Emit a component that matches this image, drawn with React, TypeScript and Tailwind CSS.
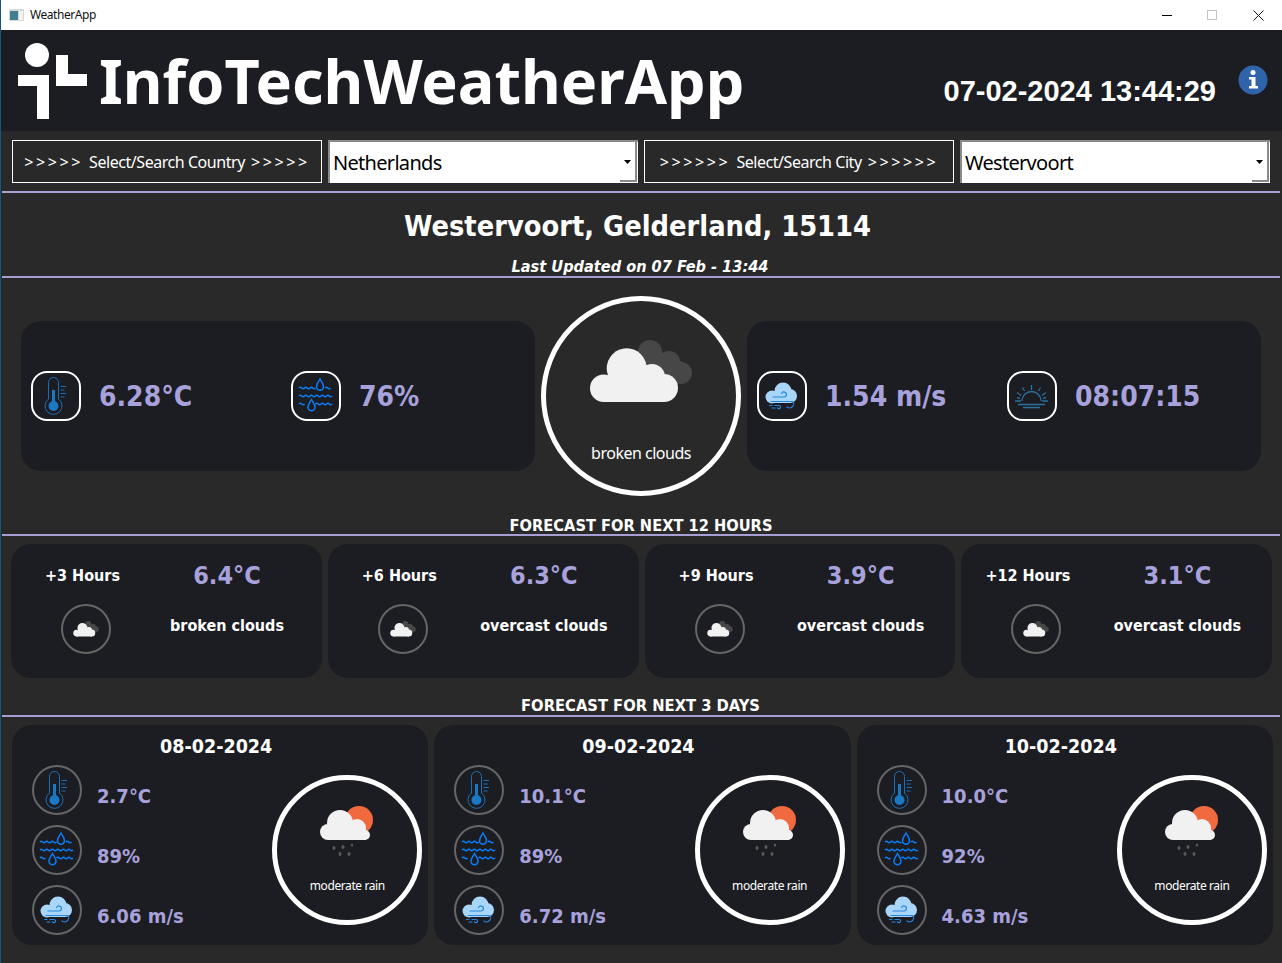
import { ReactNode } from 'react';

const hourly = [
  { label: '+3 Hours', temp: '6.4°C', desc: 'broken clouds', labelClass: 'pl-[34px]' },
  { label: '+6 Hours', temp: '6.3°C', desc: 'overcast clouds', labelClass: 'pl-[34px]' },
  { label: '+9 Hours', temp: '3.9°C', desc: 'overcast clouds', labelClass: 'pl-[34px]' },
  { label: '+12 Hours', temp: '3.1°C', desc: 'overcast clouds', labelClass: 'pl-[24px]' },
];

const daily = [
  { date: '08-02-2024', temp: '2.7°C', hum: '89%', wind: '6.06 m/s' },
  { date: '09-02-2024', temp: '10.1°C', hum: '89%', wind: '6.72 m/s' },
  { date: '10-02-2024', temp: '10.0°C', hum: '92%', wind: '4.63 m/s' },
];

// closest installed face to the bold headings in the picture
const boldFace = "font-['DejaVu_Sans_Condensed','DejaVu_Sans',sans-serif] font-stretch-condensed font-bold";

const Thermometer = () => (
  <svg viewBox="0 0 50 50" className="w-full h-full" fill="none">
    <path d="M17.500 28V11.500a5 5 0 0 1 10 0V28a8.500 8.500 0 1 1-10 0z" stroke="#1b6fb4" strokeWidth="1" />
    <rect x="21" y="19" width="3" height="14" fill="#1b78c4" />
    <circle cx="22.500" cy="35" r="5" fill="#1b78c4" />
    <path d="M29.500 15.500h5.500M29.500 19h4M29.500 22.500h5.500M29.500 26h4" stroke="#1b6fb4" strokeWidth="1" />
  </svg>
);

const Humidity = () => {
  const wave = (y: number, x1: number, x2: number) => {
    let d = `M${x1} ${y}`;
    for (let x = x1; x < x2; x += 5.5) d += `q1.375 -1.600 2.750 0 t2.750 0`;
    return d;
  };
  return (
    <svg viewBox="0 0 50 50" className="w-full h-full" fill="none" stroke="#0b7df5" strokeWidth="1.500">
      <path d={wave(17, 8, 24)} />
      <path d={wave(17, 34, 39)} />
      <path d={wave(25, 8, 40)} />
      <path d={wave(33, 8, 13)} />
      <path d={wave(33, 24.500, 40)} />
      <path d="M29 8c-1.500 2.800-3.500 4.800-3.500 7.800a3.500 3.500 0 0 0 7 0c0-3-2-5-3.500-7.800z" />
      <path d="M20.500 28.500c-1.500 2.800-3.500 4.800-3.500 7.800a3.500 3.500 0 0 0 7 0c0-3-2-5-3.500-7.800z" />
    </svg>
  );
};

const WindCloud = () => (
  <svg viewBox="0 0 50 50" className="w-full h-full" fill="none">
    <g fill="#a9d6f8">
      <circle cx="26" cy="20" r="8.500" />
      <circle cx="15" cy="26" r="6.500" />
      <circle cx="33" cy="25" r="7" />
      <rect x="15" y="22" width="18" height="10" />
    </g>
    <g stroke="#2488e2" strokeWidth="1.200" strokeLinecap="round">
      <path d="M16 26h11a2.500 2.500 0 1 0-2.400-3.400" />
      <path d="M14 30.500h22a4 4 0 0 1-1 5.500 4 4 0 0 1-5 0" />
      <path d="M18 34.500h4a1.600 1.600 0 1 1-1.500 2.200" />
      <path d="M12.500 34.500h2.500M15 37h3" />
    </g>
  </svg>
);

const Sunrise = () => (
  <svg viewBox="0 0 50 50" className="w-full h-full" fill="none" stroke="#2a6f9e" strokeWidth="1.300">
    <path d="M15 30a9.500 9.500 0 0 1 19 0" />
    <path d="M8 30h6M35 30h6M11 33.500h27M16 36.500h17" />
    <path d="M24.500 14v5M15.500 16.500l2 3.500M33.500 16.500l-2 3.500M10 21.500l4 3M39 21.500l-4 3M10 26.500l3 .8M39 26.500l-3 .8" />
  </svg>
);

// big white cloud with a dark one behind it
const BrokenCloud = ({ className }: { className: string }) => (
  <svg viewBox="0 0 102 64" className={className}>
    <g fill="#474747">
      <circle cx="60" cy="12" r="12" />
      <circle cx="79" cy="22" r="11" />
      <circle cx="91" cy="33" r="11" />
      <path d="M52 3L97 24L88 44L40 30z" />
    </g>
    <g fill="#f1f1f1">
      <circle cx="36.700" cy="28.300" r="20" />
      <circle cx="13.700" cy="48.300" r="13.700" />
      <circle cx="62" cy="37" r="13" />
      <circle cx="74" cy="48" r="14" />
      <rect x="13" y="36" width="62" height="26" />
    </g>
  </svg>
);

const RainCloud = ({ className }: { className: string }) => (
  <svg viewBox="0 0 54 52" className={className}>
    <circle cx="39" cy="15" r="14" fill="#f0693f" />
    <g fill="#f1f1f1">
      <circle cx="20" cy="18" r="13" />
      <circle cx="8" cy="27" r="8" />
      <circle cx="37" cy="23" r="9" />
      <circle cx="45" cy="30" r="5" />
      <rect x="8" y="22" width="38" height="13" />
    </g>
    <g fill="#5a5a5a">
      <ellipse cx="14" cy="43" rx="1.500" ry="2" />
      <ellipse cx="23" cy="42" rx="1.500" ry="2" />
      <ellipse cx="32" cy="40" rx="1.200" ry="1.500" />
      <ellipse cx="20" cy="49" rx="1.500" ry="2" />
      <ellipse cx="29" cy="49" rx="1.500" ry="2" />
    </g>
  </svg>
);

const IconBox = ({ children }: { children: ReactNode }) => (
  <div className="w-[50px] h-[50px] shrink-0 rounded-[16px] border-2 border-white">
    <div className="w-[50px] h-[50px] -m-[2px]">{children}</div>
  </div>
);

const IconCircle = ({ children }: { children: ReactNode }) => (
  <div className="w-[50px] h-[50px] shrink-0 rounded-full border-2 border-[#666666]">
    <div className="w-[50px] h-[50px] -m-[2px]">{children}</div>
  </div>
);

const Stat = ({ icon, value, className }: { icon: ReactNode; value: string; className?: string }) => (
  <div className={`flex items-center gap-[18px] ${className ?? ''}`}>
    <IconBox>{icon}</IconBox>
    <span className={`text-[28px] mt-[2px] text-[#a8a2dc] ${boldFace}`}>{value}</span>
  </div>
);

const Divider = () => <div className="h-[2px] ml-[1px] mr-[2px] shrink-0 bg-[#a79fd4]" />;

const Combo = ({ value }: { value: string }) => (
  <div className="relative w-[310px] h-[43px] bg-white border-t-2 border-l-2 border-[#8a8a8a] flex items-center pl-[3px] text-[20px] tracking-[-0.7px] text-black">
    {value}
    <svg viewBox="0 0 7 4" className="absolute right-[7px] top-[18px] w-[7px] h-[4px]">
      <path d="M0 0h7L3.500 4z" fill="#000" />
    </svg>
    <div className="absolute right-[1px] bottom-[1px] w-[17px] h-[2px] bg-[#8a8a8a]" />
    <div className="absolute right-[1px] top-0 bottom-[1px] w-[2px] bg-[#8a8a8a]" />
  </div>
);

const SearchLabel = ({ arrows, text }: { arrows: string; text: string }) => (
  <div className="w-[310px] h-[43px] border border-white flex items-center justify-center gap-[6px] text-[16px] tracking-[-0.45px] text-white">
    <span className="tracking-[2.600px]">{arrows}</span>
    <span>{text}</span>
    <span className="tracking-[2.600px]">{arrows}</span>
  </div>
);

export default function App() {
  return (
    <div className="w-[1282px] h-[963px] bg-[#292929] border-l-[1px] border-[#14587c] flex flex-col overflow-hidden font-['Noto_Sans',sans-serif]">
      {/* title bar */}
      <div className="h-[30px] shrink-0 bg-white flex items-center text-[12px] tracking-[-0.45px] text-[#111]">
        <svg viewBox="0 0 15 12" className="ml-[8px] w-[15px] h-[12px]">
          <rect width="15" height="12" fill="#d8d8d8" />
          <rect x="1" y="2" width="8" height="9" fill="#3f7f8f" />
          <rect x="10" y="2" width="4" height="9" fill="#f2f2f2" />
        </svg>
        <span className="ml-[6px]">WeatherApp</span>
        <div className="ml-auto flex items-center mr-[18px]">
          <div className="w-[10px] h-[1px] bg-black mr-[35px]" />
          <div className="w-[10px] h-[10px] border border-[#c4c4c4] mr-[36px]" />
          <svg viewBox="0 0 11 11" className="w-[11px] h-[11px]" stroke="#111" strokeWidth="1">
            <path d="M0.500 0.500l10 10M10.500 0.500l-10 10" />
          </svg>
        </div>
      </div>

      {/* header */}
      <div className="relative h-[101px] shrink-0 bg-[#1c1d22] flex items-center pl-[17px] text-white">
        <svg viewBox="0 0 69 77" className="mt-[2px] w-[69px] h-[77px] fill-white">
          <circle cx="19" cy="12" r="12" />
          <path d="M0 32h31v44H19V43H0z" />
          <path d="M38 12h12v19h19v12H38z" />
        </svg>
        <h1 className="ml-[12px] text-[61.200px] leading-none font-bold">InfoTechWeatherApp</h1>
        <span className="ml-auto mr-[66px] mt-[23px] text-[29px] font-bold font-['Liberation_Sans',sans-serif]">
          07-02-2024 13:44:29
        </span>
        <svg viewBox="0 0 30 30" className="absolute right-[14px] top-[35px] w-[30px] h-[30px]">
          <circle cx="15" cy="15" r="14.500" fill="#2f64aa" />
          <path d="M12.500 7.500a2.500 2.500 0 0 1 5 0a2.500 2.500 0 0 1-5 0z" fill="#fff" />
          <path d="M11 12h6.500v9H20v2.500h-9V21h2.500v-6.500H11z" fill="#fff" />
        </svg>
      </div>

      {/* selectors */}
      <div className="h-[60px] shrink-0 flex gap-[6px] pl-[11px] pt-[9px]">
        <SearchLabel arrows=">>>>>" text="Select/Search Country" />
        <Combo value="Netherlands" />
        <SearchLabel arrows=">>>>>>" text="Select/Search City" />
        <Combo value="Westervoort" />
      </div>
      <Divider />

      {/* location */}
      <div className="h-[83px] shrink-0 flex flex-col items-center text-white">
        <h2 className={`mt-[13px] -ml-[8px] text-[28.700px] leading-[40px] ${boldFace}`}>Westervoort, Gelderland, 15114</h2>
        <p className={`mt-[10px] -ml-[3px] text-[16.200px] leading-[22px] italic ${boldFace}`}>Last Updated on 07 Feb - 13:44</p>
      </div>
      <Divider />

      {/* current */}
      <div className="mt-[18px] h-[200px] shrink-0 flex items-center gap-[6px] pl-[20px]">
        <div className="w-[514px] h-[150px] rounded-[20px] bg-[#1c1d22] flex items-center pl-[10px]">
          <Stat className="w-[260px]" icon={<Thermometer />} value="6.28°C" />
          <Stat icon={<Humidity />} value="76%" />
        </div>
        <div className="w-[200px] h-[200px] rounded-full border-[5px] border-white flex flex-col items-center">
          <BrokenCloud className="mt-[39px] w-[102px] h-[64px] blur-[0.5px]" />
          <span className="mt-[38px] text-[16px] leading-[22px] tracking-[-0.5px] text-white">broken clouds</span>
        </div>
        <div className="w-[514px] h-[150px] rounded-[20px] bg-[#1c1d22] flex items-center pl-[10px]">
          <Stat className="w-[250px]" icon={<WindCloud />} value="1.54 m/s" />
          <Stat icon={<Sunrise />} value="08:07:15" />
        </div>
      </div>

      {/* next hours */}
      <h3 className={`mt-[17px] h-[21px] shrink-0 -ml-[1px] text-center text-[16.300px] leading-[26px] text-white ${boldFace}`}>
        FORECAST FOR NEXT 12 HOURS
      </h3>
      <Divider />
      <div className="mt-[8px] h-[134px] shrink-0 flex gap-[6px] pl-[10px]">
        {hourly.map((h) => (
          <div key={h.label} className="w-[310.800px] rounded-[20px] bg-[#1c1d22] flex text-white">
            <div className="w-[150px] flex flex-col">
              <span className={`mt-[21px] h-[22px] text-[16px] leading-[22px] ${boldFace} ${h.labelClass}`}>
                {h.label}
              </span>
              <div className="mt-[17px] ml-[50px]">
                <IconCircle>
                  <div className="w-full h-full flex items-center justify-center">
                    <BrokenCloud className="w-[26px] h-[16px]" />
                  </div>
                </IconCircle>
              </div>
            </div>
            <div className="w-[132px] flex flex-col items-center">
              <span className={`mt-[14px] h-[36px] text-[25px] leading-[36px] text-[#a8a2dc] ${boldFace}`}>{h.temp}</span>
              <span className={`mt-[21px] whitespace-nowrap text-[16px] leading-[22px] ${boldFace}`}>{h.desc}</span>
            </div>
          </div>
        ))}
      </div>

      {/* next days */}
      <h3 className={`mt-[16px] h-[21px] shrink-0 -ml-[2px] text-center text-[16.400px] leading-[24px] text-white ${boldFace}`}>
        FORECAST FOR NEXT 3 DAYS
      </h3>
      <Divider />
      <div className="mt-[8px] h-[220px] shrink-0 flex gap-[6px] pl-[11px]">
        {daily.map((d) => (
          <div key={d.date} className="w-[416.300px] rounded-[20px] bg-[#1c1d22] text-white">
            <div className={`pr-[8px] pt-[11px] text-center text-[19.500px] leading-[22px] ${boldFace}`}>{d.date}</div>
            <div className="flex items-center pl-[20px] pr-[6px] -mt-[1px]">
              <div className="flex flex-col gap-[10px] mt-[8px]">
                {[
                  { icon: <Thermometer />, value: d.temp },
                  { icon: <Humidity />, value: d.hum },
                  { icon: <WindCloud />, value: d.wind },
                ].map((s) => (
                  <div key={s.value} className="flex items-center gap-[15px]">
                    <IconCircle>{s.icon}</IconCircle>
                    <span className={`text-[20px] mt-[11px] text-[#a8a2dc] ${boldFace}`}>{s.value}</span>
                  </div>
                ))}
              </div>
              <div className="ml-auto w-[150px] h-[150px] mt-[8px] rounded-full border-[5px] border-white flex flex-col items-center">
                <RainCloud className="mt-[25px] w-[54px] h-[52px] blur-[0.3px]" />
                <span className="mt-[21px] text-[12px] leading-[16px] tracking-[-0.4px]">moderate rain</span>
              </div>
            </div>
          </div>
        ))}
      </div>
    </div>
  );
}
